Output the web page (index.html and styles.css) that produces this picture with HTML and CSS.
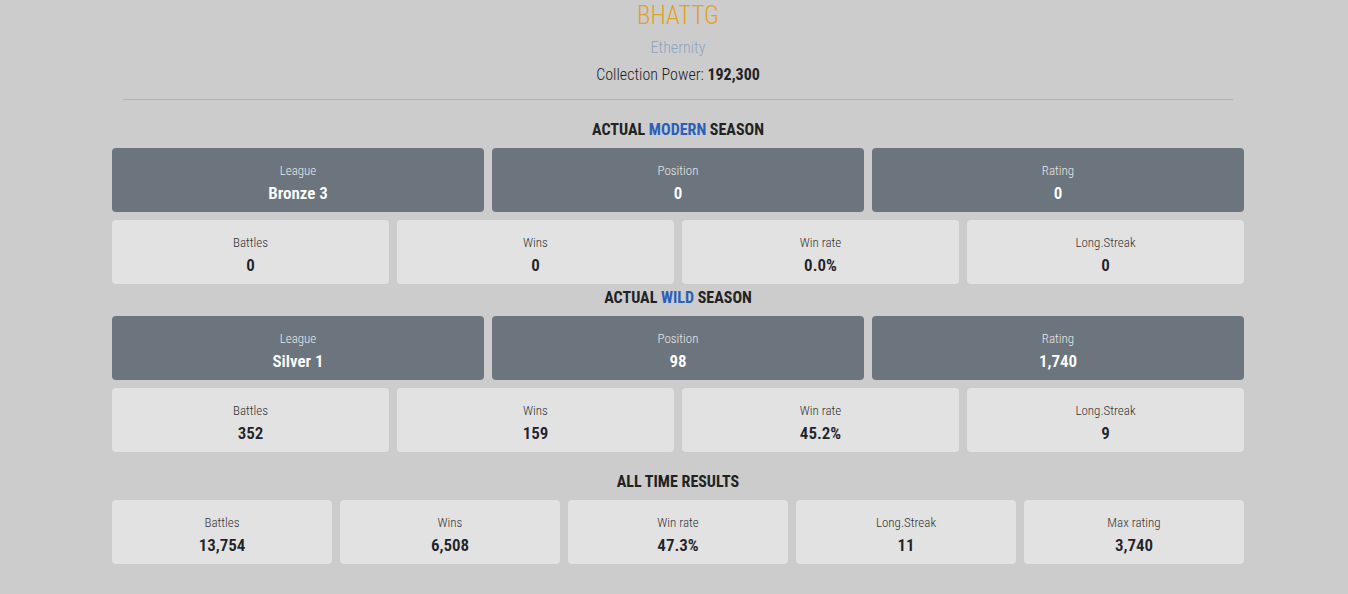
FILE: index.html
```html
<!DOCTYPE html>
<html>
<head>
<meta charset="utf-8">
<link rel="stylesheet" href="styles.css">
</head>
<body>
<div class="page">
  <header class="head">
    <div class="name">BHATTG</div>
    <div class="guild">Ethernity</div>
    <div class="power">Collection Power: <b>192,300</b></div>
  </header>
  <hr class="rule">

  <h2 class="sec">ACTUAL <span class="hl">MODERN</span> SEASON</h2>
  <div class="grid g3">
    <div class="card dark"><div class="lbl">League</div><div class="val">Bronze 3</div></div>
    <div class="card dark"><div class="lbl">Position</div><div class="val">0</div></div>
    <div class="card dark"><div class="lbl">Rating</div><div class="val">0</div></div>
  </div>
  <div class="grid g4">
    <div class="card light"><div class="lbl">Battles</div><div class="val">0</div></div>
    <div class="card light"><div class="lbl">Wins</div><div class="val">0</div></div>
    <div class="card light"><div class="lbl">Win rate</div><div class="val">0.0%</div></div>
    <div class="card light"><div class="lbl">Long.Streak</div><div class="val">0</div></div>
  </div>

  <h2 class="sec tight">ACTUAL <span class="hl">WILD</span> SEASON</h2>
  <div class="grid g3">
    <div class="card dark"><div class="lbl">League</div><div class="val">Silver 1</div></div>
    <div class="card dark"><div class="lbl">Position</div><div class="val">98</div></div>
    <div class="card dark"><div class="lbl">Rating</div><div class="val">1,740</div></div>
  </div>
  <div class="grid g4">
    <div class="card light"><div class="lbl">Battles</div><div class="val">352</div></div>
    <div class="card light"><div class="lbl">Wins</div><div class="val">159</div></div>
    <div class="card light"><div class="lbl">Win rate</div><div class="val">45.2%</div></div>
    <div class="card light"><div class="lbl">Long.Streak</div><div class="val">9</div></div>
  </div>

  <h2 class="sec">ALL TIME RESULTS</h2>
  <div class="grid g5">
    <div class="card light"><div class="lbl">Battles</div><div class="val">13,754</div></div>
    <div class="card light"><div class="lbl">Wins</div><div class="val">6,508</div></div>
    <div class="card light"><div class="lbl">Win rate</div><div class="val">47.3%</div></div>
    <div class="card light"><div class="lbl">Long.Streak</div><div class="val">11</div></div>
    <div class="card light"><div class="lbl">Max rating</div><div class="val">3,740</div></div>
  </div>
</div>
</body>
</html>
```
FILE: styles.css
```css
html, body {
  margin: 0;
  padding: 0;
  background: #cccccc;
}
body {
  font-family: "Roboto Condensed", "Roboto", "DejaVu Sans Condensed", sans-serif;
  font-stretch: 75%;
  color: #222;
  padding-left: 8px;
}
.page {
  width: 1132px;
  margin: 0 auto;
}
.head {
  text-align: center;
}
.name {
  color: #e0a21f;
  font-size: 25px;
  font-weight: 300;
  line-height: 30px;
  padding-top: 1px;
}
.guild {
  color: #8ea5c0;
  font-size: 16px;
  font-weight: 300;
  line-height: 20px;
  margin-top: 7px;
}
.power {
  font-size: 16px;
  font-weight: 300;
  line-height: 20px;
  margin-top: 7px;
  color: #222;
}
.power b {
  font-weight: 700;
}
.rule {
  width: 1110px;
  margin: 14px auto 0;
  border: 0;
  border-top: 1px solid #b3b3b3;
  height: 0;
}
.sec {
  text-align: center;
  font-size: 16px;
  font-weight: 700;
  line-height: 20px;
  margin: 20px 0 8px;
  color: #222;
}
.sec.tight {
  margin: 4px 0 8px;
}
.hl {
  color: #2b5fbb;
}
.grid {
  display: grid;
  gap: 8px;
  margin-bottom: 8px;
}
.g3 { grid-template-columns: repeat(3, 1fr); }
.g4 { grid-template-columns: repeat(4, 1fr); margin-bottom: 0; }
.g5 { grid-template-columns: repeat(5, 1fr); }
.card {
  height: 64px;
  box-sizing: border-box;
  padding-top: 5px;
  border-radius: 4px;
  display: flex;
  flex-direction: column;
  align-items: center;
  justify-content: center;
  text-align: center;
}
.card.dark {
  background: #6c757d;
}
.card.light {
  background: #e2e2e2;
}
.lbl {
  font-size: 13px;
  font-weight: 300;
  line-height: 18px;
}
.val {
  font-size: 17px;
  font-weight: 600;
  line-height: 22px;
  margin-top: 2px;
}
.dark .lbl { color: #e6e8ea; }
.dark .val { color: #ffffff; }
.light .lbl { color: #333; }
.light .val { color: #1f232a; }
```
